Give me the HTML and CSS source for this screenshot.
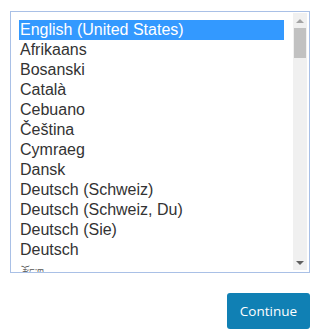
FILE: index.html
```html
<!DOCTYPE html>
<html>
<head>
<meta charset="utf-8">
<link rel="stylesheet" href="styles.css">
</head>
<body>
<div class="page">
  <div class="listbox">
    <ul class="options">
      <li class="opt selected">English (United States)</li>
      <li class="opt">Afrikaans</li>
      <li class="opt">Bosanski</li>
      <li class="opt">Català</li>
      <li class="opt">Cebuano</li>
      <li class="opt">Čeština</li>
      <li class="opt">Cymraeg</li>
      <li class="opt">Dansk</li>
      <li class="opt">Deutsch (Schweiz)</li>
      <li class="opt">Deutsch (Schweiz, Du)</li>
      <li class="opt">Deutsch (Sie)</li>
      <li class="opt">Deutsch</li>
      <li class="opt small">རྫོང་ཁ</li>
    </ul>
    <div class="scrollbar">
      <div class="arrow up"></div>
      <div class="track"><div class="thumb"></div></div>
      <div class="arrow down"></div>
    </div>
  </div>
  <div class="actions">
    <button class="btn">Continue</button>
  </div>
</div>
</body>
</html>
```
FILE: styles.css
```css
html, body {
  margin: 0;
  padding: 0;
  background: #ffffff;
}
.page {
  padding: 11px 9px 0 10px;
  width: 300px;
}
.listbox {
  display: flex;
  height: 260px;
  border: 1px solid #a9c0e6;
  overflow: hidden;
}
.options {
  list-style: none;
  margin: 0;
  padding: 8px 9px 0 8px;
  flex: 1;
  overflow: hidden;
  font-family: "Liberation Sans", Arial, sans-serif;
  font-size: 16px;
  color: #333333;
}
.opt {
  height: 20px;
  line-height: 20px;
  padding-left: 1px;
  white-space: nowrap;
}
.opt.small {
  font-size: 10px;
  line-height: 26px;
  color: #555;
  padding-left: 3px;
}
.selected {
  background: #3399ff;
  color: #ffffff;
}
.scrollbar {
  width: 14px;
  margin: 1px 2px 2px 0;
  background: #f0f0f0;
  display: flex;
  flex-direction: column;
  align-items: center;
}
.arrow {
  width: 0;
  height: 0;
  border-left: 4px solid transparent;
  border-right: 4px solid transparent;
}
.arrow.up {
  margin-top: 6px;
  border-bottom: 4px solid #a3a3a3;
}
.arrow.down {
  margin-bottom: 5px;
  border-top: 4px solid #606060;
}
.track {
  flex: 1;
  width: 100%;
  padding-top: 5px;
}
.thumb {
  width: 12px;
  height: 30px;
  margin: 0 auto;
  background: #c1c1c1;
}
.actions {
  display: flex;
  justify-content: flex-end;
  margin-top: 20px;
}
.btn {
  width: 83px;
  height: 36px;
  border: none;
  border-radius: 3px;
  background: #1080b4;
  color: #ffffff;
  font-family: "Open Sans", "Noto Sans", sans-serif;
  font-size: 13.5px;
  padding: 0;
}
```
